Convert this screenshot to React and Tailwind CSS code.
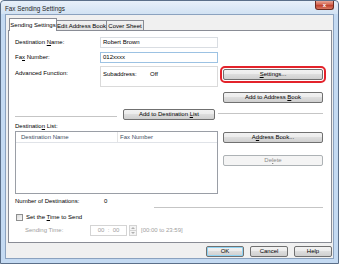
import React from 'react';

const Btn = ({ children, className = '', disabled = false }) => (
  <div
    className={`h-[11px] flex items-center justify-center rounded-[2px] border leading-[9px] whitespace-nowrap ${
      disabled
        ? 'border-[#adb2b5] bg-[#f4f4f4] text-[#8b8b8b]'
        : 'border-[#707070] bg-[linear-gradient(#f2f2f2_0%,#ebebeb_50%,#dddddd_50%,#cfcfcf_100%)] text-black'
    } ${className}`}
  >
    <span>{children}</span>
  </div>
);

const U = ({ children }) => <span className="underline underline-offset-[1px]">{children}</span>;

export default function App() {
  return (
    <div className="w-[339px] h-[264px] bg-white font-['Liberation_Sans',Arial,sans-serif] text-[6px] text-black">
      <div className="w-[339px] h-[264px] border border-[#5b6f89] rounded-t-[4px] bg-[#c4daf2] flex flex-col">
        {/* title bar */}
        <div className="h-[13px] flex items-start justify-between pl-[4px] pr-[4px] bg-[linear-gradient(to_bottom,#e8f0f9,#d2e2f3)] rounded-t-[4px]">
          <span className="mt-[4px] leading-[7px] text-[6.3px] text-[#1e1e1e]">Fax Sending Settings</span>
          <div className="w-[19px] h-[9px] rounded-b-[3px] border border-t-0 border-[#6d2a1f] bg-[linear-gradient(#e9a898,#cf5b47_50%,#bd3d29_50%,#d97a64)] flex items-center justify-center text-white text-[6px] font-bold leading-[6px]">
            x
          </div>
        </div>

        {/* client area */}
        <div className="mx-[4px] w-[329px] h-[245px] bg-[#f0f0f0] border border-[#8ba2bf] flex flex-col">
          {/* tabs */}
          <div className="flex items-end ml-[3px] mt-[2px] h-[13px] relative z-10 whitespace-nowrap">
            <div className="h-[13px] w-[48px] -mb-[1px] bg-white border border-b-0 border-[#898c95] flex items-start justify-center pt-[3px] leading-[6px]">
              Sending Settings
            </div>
            <div className="h-[10px] w-[50px] border border-b-0 border-l-0 border-[#898c95] bg-[linear-gradient(#f2f2f2,#e3e3e3)] flex items-center justify-center leading-[6px]">
              Edit Address Book
            </div>
            <div className="h-[10px] w-[37px] border border-b-0 border-l-0 border-[#898c95] bg-[linear-gradient(#f2f2f2,#e3e3e3)] flex items-center justify-center leading-[6px]">
              Cover Sheet
            </div>
          </div>

          {/* tab panel */}
          <div className="ml-[2px] w-[324px] h-[213px] bg-white border border-[#898c95] flex flex-col pl-[6px]">
            {/* destination name */}
            <div className="flex h-[11px] mt-[6px] items-center">
              <div className="w-[85px]">
                Destination <U>N</U>ame:
              </div>
              <div className="w-[118px] h-[11px] border border-[#d9dde2] bg-white flex items-center pl-[2px]">
                Robert Brown
              </div>
            </div>
            {/* fax number */}
            <div className="flex h-[11px] mt-[4px] items-center">
              <div className="w-[85px]">
                Fa<U>x</U> Number:
              </div>
              <div className="w-[118px] h-[11px] border border-[#9cc2e3] bg-white flex items-center pl-[2px]">
                012xxxx
              </div>
            </div>
            {/* advanced function */}
            <div className="flex h-[21px] mt-[3px]">
              <div className="w-[85px] mt-[4px] leading-[6px]">Advanced Function:</div>
              <div className="w-[118px] h-[21px] border border-[#dadada] bg-white flex pl-[2px] pt-[4px] leading-[6px]">
                <span className="w-[47px]">Subaddress:</span>
                <span>Off</span>
              </div>
              <div className="ml-[5px] mt-[3px]">
                <Btn className="w-[100px] outline-2 outline-[#e3232b] outline-offset-[1px]">
                  <U>S</U>ettings...
                </Btn>
              </div>
            </div>
            {/* add to address book */}
            <div className="flex h-[11px] mt-[5px]">
              <div className="w-[208px]" />
              <Btn className="w-[100px]">
                Add to Address <U>B</U>ook
              </Btn>
            </div>
            {/* add to destination list */}
            <div className="flex h-[11px] mt-[6px] items-center">
              <div className="w-[102px] h-px bg-[#c5c5c5] mt-[3px]" />
              <Btn className="w-[92px] ml-[6px]">
                Add to Destination <U>L</U>ist
              </Btn>
              <div className="w-[105px] h-px bg-[#c5c5c5] ml-[3px] -mt-[3px]" />
            </div>
            {/* destination list label */}
            <div className="h-[8px] mt-[2px] flex items-center">
              <span>
                Destinatio<U>n</U> List:
              </span>
            </div>
            {/* list + buttons */}
            <div className="flex mt-[1px] h-[63px]">
              <div className="w-[203px] h-[63px] border border-[#9a9ea6] bg-white flex flex-col">
                <div className="h-[11px] flex border-b border-[#e0e3e8] text-[#3c4d63]">
                  <div className="w-[102px] border-r border-[#e5e5e5] pl-[5px] flex items-center">Destination Name</div>
                  <div className="pl-[2px] flex items-center">Fax Number</div>
                </div>
              </div>
              <div className="ml-[5px] flex flex-col">
                <Btn className="w-[100px] mt-[1px]">
                  A<U>d</U>dress Book...
                </Btn>
                <Btn disabled className="w-[100px] mt-[12px]">
                  De<U>l</U>ete
                </Btn>
              </div>
            </div>
            {/* number of destinations */}
            <div className="h-[8px] mt-[3px] flex items-center">
              <div className="w-[89px]">Number of Destinations:</div>
              <div>0</div>
            </div>
            <div className="h-px w-[308px] mt-[2px] bg-[linear-gradient(to_right,transparent_0%,transparent_45%,#c5c5c5_45%)]" />
            {/* checkbox */}
            <div className="h-[8px] mt-[5px] flex items-center">
              <div className="w-[7px] h-[7px] ml-[1px] border border-[#8e8f8f] bg-[linear-gradient(135deg,#dcdcdc,#f8f8f8)]" />
              <div className="ml-[3px]">
                Set the <U>T</U>ime to Send
              </div>
            </div>
            {/* sending time */}
            <div className="h-[11px] mt-[4px] flex items-center text-[#a0a0a0]">
              <div className="w-[75px] pl-[10px]">Sending Time:</div>
              <div className="w-[37px] h-[11px] border border-[#d4d4d4] bg-white flex items-center justify-center">
                00&nbsp;&nbsp;:&nbsp;&nbsp;00
              </div>
              <div className="w-[8px] h-[11px] ml-[2px] flex flex-col">
                <div className="h-[6px] border border-[#d4d4d4] bg-[#f4f4f4] flex items-center justify-center">
                  <svg width="4" height="2" viewBox="0 0 4 2"><path d="M0 2 L2 0 L4 2 Z" fill="#b0b0b0" /></svg>
                </div>
                <div className="h-[5px] border border-t-0 border-[#d4d4d4] bg-[#f4f4f4] flex items-center justify-center">
                  <svg width="4" height="2" viewBox="0 0 4 2"><path d="M0 0 L2 2 L4 0 Z" fill="#b0b0b0" /></svg>
                </div>
              </div>
              <div className="ml-[4px]">[00:00 to 23:59]</div>
            </div>
          </div>

          {/* dialog buttons */}
          <div className="flex justify-end mt-[3px] pr-[1px] gap-[6px]">
            <Btn className="w-[38px] border-[#3c7fb1] shadow-[inset_0_0_0_1px_#8fd3f3]">OK</Btn>
            <Btn className="w-[38px]">Cancel</Btn>
            <Btn className="w-[38px]">Help</Btn>
          </div>
        </div>
      </div>
    </div>
  );
}
